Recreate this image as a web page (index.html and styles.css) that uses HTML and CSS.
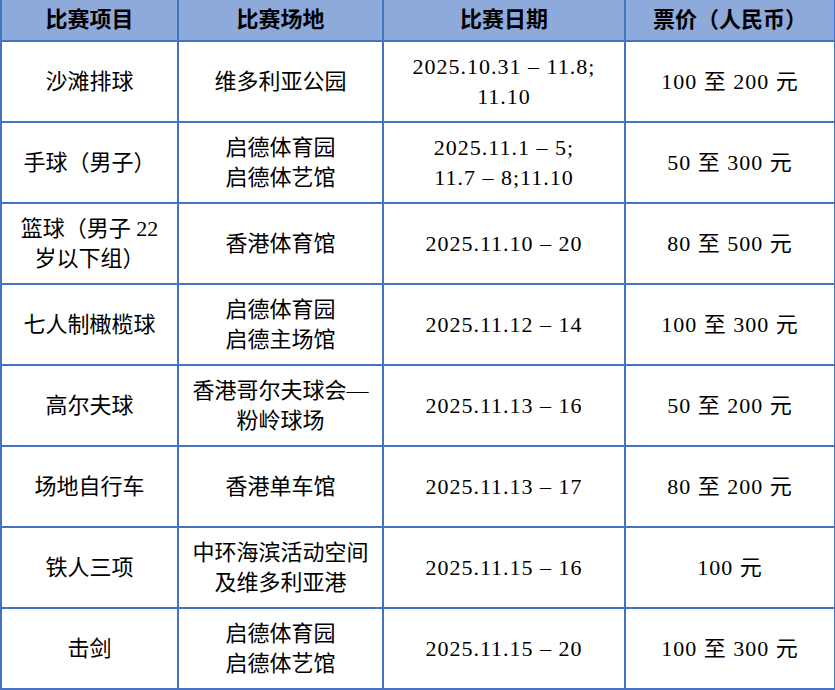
FILE: index.html
```html
<!DOCTYPE html>
<html lang="zh-CN">
<head>
<meta charset="utf-8">
<title>比赛项目</title>
<link rel="stylesheet" href="styles.css">
</head>
<body>
<table class="schedule">
  <colgroup>
    <col class="c-event">
    <col class="c-venue">
    <col class="c-date">
    <col class="c-price">
  </colgroup>
  <thead>
    <tr>
      <th>比赛项目</th>
      <th>比赛场地</th>
      <th>比赛日期</th>
      <th>票价（人民币）</th>
    </tr>
  </thead>
  <tbody>
    <tr>
      <td>沙滩排球</td>
      <td>维多利亚公园</td>
      <td class="num">2025.10.31 – 11.8;<br>11.10</td>
      <td class="num">100 至 200 元</td>
    </tr>
    <tr>
      <td>手球（男子）</td>
      <td>启德体育园<br>启德体艺馆</td>
      <td class="num">2025.11.1 – 5;<br>11.7 – 8;11.10</td>
      <td class="num">50 至 300 元</td>
    </tr>
    <tr>
      <td>篮球（男子 22<br>岁以下组）</td>
      <td>香港体育馆</td>
      <td class="num">2025.11.10 – 20</td>
      <td class="num">80 至 500 元</td>
    </tr>
    <tr>
      <td>七人制橄榄球</td>
      <td>启德体育园<br>启德主场馆</td>
      <td class="num">2025.11.12 – 14</td>
      <td class="num">100 至 300 元</td>
    </tr>
    <tr>
      <td>高尔夫球</td>
      <td>香港哥尔夫球会—<br>粉岭球场</td>
      <td class="num">2025.11.13 – 16</td>
      <td class="num">50 至 200 元</td>
    </tr>
    <tr>
      <td>场地自行车</td>
      <td>香港单车馆</td>
      <td class="num">2025.11.13 – 17</td>
      <td class="num">80 至 200 元</td>
    </tr>
    <tr>
      <td>铁人三项</td>
      <td>中环海滨活动空间<br>及维多利亚港</td>
      <td class="num">2025.11.15 – 16</td>
      <td class="num">100 元</td>
    </tr>
    <tr>
      <td>击剑</td>
      <td>启德体育园<br>启德体艺馆</td>
      <td class="num">2025.11.15 – 20</td>
      <td class="num">100 至 300 元</td>
    </tr>
  </tbody>
</table>
</body>
</html>
```

FILE: styles.css
```css
html, body {
  margin: 0;
  padding: 0;
  background: #ffffff;
}

.schedule {
  border-collapse: collapse;
  table-layout: fixed;
  width: 834px;
  margin-top: -2px;
  font-family: "Liberation Serif", "Noto Sans CJK SC", serif;
  font-size: 22px;
  color: #000000;
}

.c-event { width: 177px; }
.c-venue { width: 205px; }
.c-date { width: 242px; }
.c-price { width: 210px; }

.schedule th,
.schedule td {
  border: 2px solid #4472c4;
  text-align: center;
  vertical-align: middle;
  padding: 0 4px;
  line-height: 30px;
}

.schedule th {
  background: #8eaadb;
  font-weight: 700;
  height: 40px;
}

.schedule td {
  height: 79px;
}

.schedule td.num {
  letter-spacing: 1px;
}
```
